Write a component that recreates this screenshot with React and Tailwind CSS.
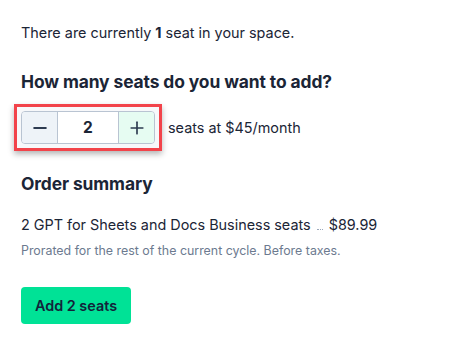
import { Minus, Plus } from 'lucide-react';

export default function App() {
    return (
        <div className="w-[468px] h-[341px] bg-white text-[#1b2536] font-['Inter',sans-serif] pl-[21px] pt-[22px]">
            <p className="text-[14.4px] leading-[21px]">There are currently <span className="font-bold">1</span> seat in your space.</p>

            <h2 className="mt-[27px] text-[17.4px] leading-[24px] font-bold tracking-[-0.1px]">How many seats do you want to add?</h2>

            <div className="mt-[10px] flex items-center">
                <div className="-ml-[7px] border-[3px] border-[#f2434a] p-[4px] bg-[#f7f8fa] shadow-[0_3px_6px_rgba(0,0,0,0.3)]">
                    <div className="flex h-[33px] w-[134px] rounded-[4px] border border-[#b9c4d2] overflow-hidden">
                        <button className="w-[36px] flex items-center justify-center bg-[#eef3f8] border-r border-[#b9c4d2]">
                            <Minus size={20} strokeWidth={2.4} className="text-[#2d3b50]" />
                        </button>
                        <div className="flex-1 flex items-center justify-center bg-white text-[15.5px] font-bold">2</div>
                        <button className="w-[36px] flex items-center justify-center bg-[#e6fcf2] border-l border-[#b9c4d2]">
                            <Plus size={20} strokeWidth={2} className="text-[#2d3b50]" />
                        </button>
                    </div>
                </div>
                <span className="ml-[6px] text-[14.4px]">seats at $45/month</span>
            </div>

            <h2 className="mt-[21px] text-[17.4px] leading-[24px] font-bold tracking-[-0.1px]">Order summary</h2>

            <div className="mt-[19px] flex items-center text-[14.4px] leading-[20px]">
                <span>2 GPT for Sheets and Docs Business seats</span>
                <span className="mx-[6px] mt-[8px] w-[6px] border-b border-dotted border-[#9aa8bb]"></span>
                <span>$89.99</span>
            </div>
            <p className="mt-[8px] text-[12.4px] leading-[16px] text-[#6c7a8f]">Prorated for the rest of the current cycle. Before taxes.</p>

            <button className="mt-[28px] h-[37px] w-[110px] rounded-[4px] bg-[#00e296] text-[14.4px] font-semibold text-[#13233a]">Add 2 seats</button>
        </div>
    );
}
